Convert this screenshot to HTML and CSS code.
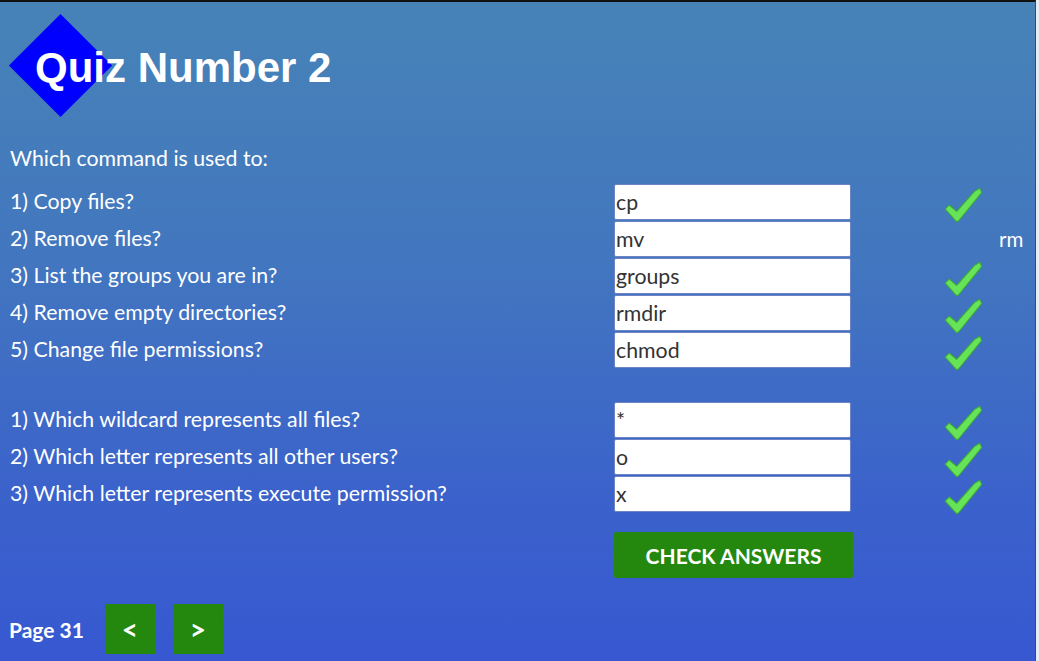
FILE: index.html
```html
<!DOCTYPE html>
<html>
<head>
<meta charset="utf-8">
<title>Quiz Number 2</title>
<link rel="stylesheet" href="styles.css">
</head>
<body>
<div class="page">
  <header class="header">
    <div class="diamond"></div>
    <h1 class="title">Quiz Number 2</h1>
  </header>

  <p class="intro">Which command is used to:</p>

  <div class="group">
    <div class="row">
      <span class="label">1) Copy files?</span>
      <input class="answer" type="text" value="cp">
      <span class="mark"><svg class="check" viewBox="0 0 40 36"><polygon points="2,22 6,18 13,24 30,5 35,2 37,6 15,33 13,34"/></svg></span>
      <span class="correct"></span>
    </div>
    <div class="row">
      <span class="label">2) Remove files?</span>
      <input class="answer" type="text" value="mv">
      <span class="mark"></span>
      <span class="correct">rm</span>
    </div>
    <div class="row">
      <span class="label">3) List the groups you are in?</span>
      <input class="answer" type="text" value="groups">
      <span class="mark"><svg class="check" viewBox="0 0 40 36"><polygon points="2,22 6,18 13,24 30,5 35,2 37,6 15,33 13,34"/></svg></span>
      <span class="correct"></span>
    </div>
    <div class="row">
      <span class="label">4) Remove empty directories?</span>
      <input class="answer" type="text" value="rmdir">
      <span class="mark"><svg class="check" viewBox="0 0 40 36"><polygon points="2,22 6,18 13,24 30,5 35,2 37,6 15,33 13,34"/></svg></span>
      <span class="correct"></span>
    </div>
    <div class="row">
      <span class="label">5) Change file permissions?</span>
      <input class="answer" type="text" value="chmod">
      <span class="mark"><svg class="check" viewBox="0 0 40 36"><polygon points="2,22 6,18 13,24 30,5 35,2 37,6 15,33 13,34"/></svg></span>
      <span class="correct"></span>
    </div>
  </div>

  <div class="group group-second">
    <div class="row">
      <span class="label">1) Which wildcard represents all files?</span>
      <input class="answer" type="text" value="*">
      <span class="mark"><svg class="check" viewBox="0 0 40 36"><polygon points="2,22 6,18 13,24 30,5 35,2 37,6 15,33 13,34"/></svg></span>
      <span class="correct"></span>
    </div>
    <div class="row">
      <span class="label">2) Which letter represents all other users?</span>
      <input class="answer" type="text" value="o">
      <span class="mark"><svg class="check" viewBox="0 0 40 36"><polygon points="2,22 6,18 13,24 30,5 35,2 37,6 15,33 13,34"/></svg></span>
      <span class="correct"></span>
    </div>
    <div class="row">
      <span class="label">3) Which letter represents execute permission?</span>
      <input class="answer" type="text" value="x">
      <span class="mark"><svg class="check" viewBox="0 0 40 36"><polygon points="2,22 6,18 13,24 30,5 35,2 37,6 15,33 13,34"/></svg></span>
      <span class="correct"></span>
    </div>
  </div>

  <div class="actions">
    <button class="check-btn" type="button">CHECK ANSWERS</button>
  </div>

  <footer class="footer">
    <span class="page-num">Page 31</span>
    <button class="nav-btn" type="button">&lt;</button>
    <button class="nav-btn" type="button">&gt;</button>
  </footer>
</div>
</body>
</html>
```

FILE: styles.css
```css
html, body {
  margin: 0;
  padding: 0;
  height: 100%;
}

body {
  font-family: "Lato", "Liberation Sans", sans-serif;
  color: #fff;
  background: #e9ebf2;
}

.page {
  box-sizing: border-box;
  width: 1036px;
  height: 661px;
  border-top: 2px solid #111;
  border-right: 1px solid #2a45a8;
  background: linear-gradient(180deg, #4783b7 0%, #4276bf 40%, #3b62cb 75%, #3758d1 100%);
  overflow: hidden;
}

.header {
  position: relative;
  height: 137px;
}

.diamond {
  position: absolute;
  left: 24px;
  top: 27px;
  width: 73px;
  height: 73px;
  background: #0000ff;
  transform: rotate(45deg);
}

.title {
  position: relative;
  margin: 0;
  padding: 42px 0 0 35px;
  font-family: "Liberation Sans", Arial, sans-serif;
  font-weight: bold;
  font-size: 42px;
  line-height: 48px;
  color: #fff;
}

.intro {
  margin: 0 0 7px 0;
  padding-left: 10px;
  height: 37px;
  line-height: 38px;
  font-size: 21.3px;
}

.group {
  display: flex;
  flex-direction: column;
  gap: 1px;
}

.group-second {
  margin-top: 34px;
}

.row {
  display: grid;
  grid-template-columns: 614px 237px 148px auto;
  align-items: center;
  height: 36px;
}

.label {
  padding-left: 10px;
  font-size: 21.3px;
  line-height: 37px;
}

.answer {
  box-sizing: border-box;
  width: 237px;
  height: 36px;
  margin: 0;
  padding: 0 0 0 1px;
  border: 1px solid #6e84c4;
  border-radius: 2px;
  background: #fff;
  font-family: "Lato", "Liberation Sans", sans-serif;
  font-size: 21.3px;
  color: #333;
  outline: none;
}

.mark {
  display: flex;
  align-items: center;
  height: 36px;
  padding-left: 92px;
}

.check {
  width: 42px;
  height: 38px;
  margin-top: 6px;
}

.check polygon {
  fill: #66e356;
  stroke: #3ba63a;
  stroke-width: 1;
  stroke-linejoin: round;
}

.correct {
  font-size: 20.5px;
  line-height: 36px;
  color: #fff;
}

.actions {
  margin-top: 21px;
  padding-left: 614px;
}

.check-btn {
  width: 239px;
  height: 46px;
  margin: 0;
  border: none;
  border-radius: 2px;
  background: #25880e;
  color: #fff;
  font-family: "Lato", "Liberation Sans", sans-serif;
  font-weight: bold;
  font-size: 21px;
  cursor: pointer;
}

.footer {
  display: flex;
  align-items: center;
  gap: 18px;
  margin-top: 26px;
  padding-left: 9px;
}

.page-num {
  font-weight: bold;
  font-size: 21px;
  margin-right: 3px;
}

.nav-btn {
  width: 50px;
  height: 50px;
  margin: 0;
  border: none;
  background: #25880e;
  color: #fff;
  font-family: "Lato", "Liberation Sans", sans-serif;
  font-weight: bold;
  font-size: 28px;
  cursor: pointer;
}
```
